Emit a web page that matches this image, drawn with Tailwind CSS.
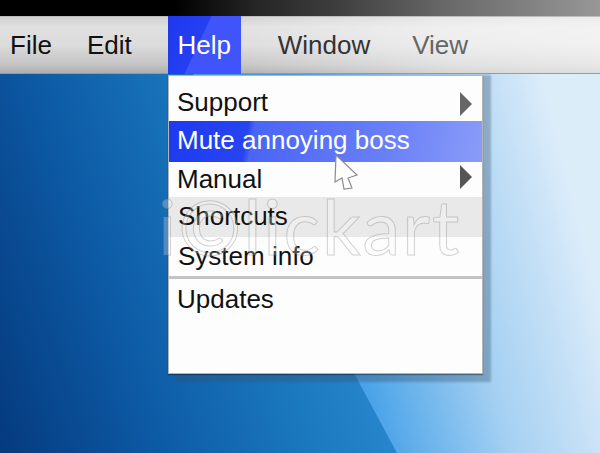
<!DOCTYPE html>
<html><head><meta charset="utf-8"><script src="https://cdn.jsdelivr.net/npm/@tailwindcss/browser@4"></script></head>
<body class="m-0">
<div class="relative w-[600px] h-[453px] overflow-hidden font-['Liberation_Sans',Arial,sans-serif] bg-[linear-gradient(72deg,#053a7e_0%,#0d5ba6_22%,#1b79bf_42%,#2f8fd6_62%,#3c9ae0_100%)]">
  <svg class="absolute inset-0" width="600" height="453" viewBox="0 0 600 453" aria-hidden="true">
    <defs>
      <linearGradient id="a" gradientUnits="userSpaceOnUse" x1="380" y1="440" x2="620" y2="380"><stop offset="0" stop-color="#4aa3e8"/><stop offset=".5" stop-color="#a5d0f2"/><stop offset=".8" stop-color="#c5e0f6"/><stop offset="1" stop-color="#dcedfa"/></linearGradient>
    </defs>
    <polygon points="193,74 600,74 600,453 397,453" fill="url(#a)"/>
  </svg>
  <div class="absolute left-0 top-0 w-full h-[16px] bg-[linear-gradient(90deg,#000_0%,#000_29%,#242424_42%,#3c3c3c_55%,#6a6a6a_75%,#979797_100%)]"></div>
  <div class="absolute left-0 top-[16px] w-full h-[58px] border-t border-t-[#bdbdbd] border-b border-b-[#9a9a9a] bg-[linear-gradient(180deg,#d2d2d2_0%,#e0e0e0_18%,#dcdcdc_50%,#c4c4c4_85%,#aeaeae_100%)]">
    <div class="absolute inset-0 bg-[linear-gradient(90deg,transparent_0%,transparent_35%,rgba(255,255,255,.5)_75%,rgba(255,255,255,.6)_100%)]"></div>
    <div class="relative flex items-center h-full text-[26px] leading-none">
      <span class="ml-[10px] text-[#111]">File</span>
      <span class="ml-[35px] text-[#111]">Edit</span>
      <span class="ml-[36px] w-[73px] h-[58px] -my-px flex items-center justify-center text-white bg-[linear-gradient(115deg,#1f38ee_0%,#253ff2_43%,#3f55fb_44%,#3f55fb_100%)]">Help</span>
      <span class="ml-[37px] text-[#333]">Window</span>
      <span class="ml-[42px] text-[#666]">View</span>
    </div>
  </div>
  <div class="absolute left-[176px] top-[75px] w-[315px] h-[307px] bg-[#34506e]/35 blur-[1px]"></div>
  <div class="absolute left-[168px] top-[75px] w-[315px] h-[299px] bg-[#fdfdfd] border border-[#b5b5b5] shadow-[0_1px_1px_rgba(0,0,0,.35)] flex flex-col text-[26px] leading-none text-[#111]">
    <div class="h-[45px] pt-[6px] flex items-center justify-between pl-[8px] pr-[10px]"><span>Support</span><svg class="mt-[4px]" width="12" height="24" viewBox="0 0 12 24"><path d="M0 0L12 12L0 24Z" fill="#666"/></svg></div>
    <div class="h-[41px] flex items-center pl-[8px] text-white bg-[linear-gradient(100deg,#1f3af0_0%,#2744f2_25%,#4a64f6_27%,#6a80f8_70%,#8a9cf8_100%)]"><span class="-mt-[4px]">Mute annoying boss</span></div>
    <div class="h-[35px] pb-[2px] flex items-center justify-between pl-[8px] pr-[10px]"><span>Manual</span><svg class="mb-[3px]" width="12" height="24" viewBox="0 0 12 24"><path d="M0 0L12 12L0 24Z" fill="#555"/></svg></div>
    <div class="h-[40px] pb-[2px] flex items-center pl-[9px] bg-[#e9e9e9]"><span>Shortcuts</span></div>
    <div class="h-[42px] pb-[2px] border-b-[3px] border-b-[#c4c4c4] flex items-center pl-[9px]"><span>System info</span></div>
    <div class="h-[42px] pb-[2px] flex items-center pl-[8px]"><span>Updates</span></div>
  </div>
  <svg class="absolute left-[334px] top-[154px]" width="26" height="37" viewBox="0 0 26 37" aria-hidden="true"><path d="M2 1L1 28L8 24L10 35L18 34L14 24L23 21Z" fill="#fff" stroke="#8c8c8c" stroke-width="1.200"/></svg>
  <div class="absolute left-[158px] top-[188px] text-[76px] leading-none font-['Lato',sans-serif] font-normal tracking-[2px] text-white/25 [-webkit-text-stroke:1px_rgba(110,110,110,.3)]">i©lickart</div>
</div>
</body></html>
